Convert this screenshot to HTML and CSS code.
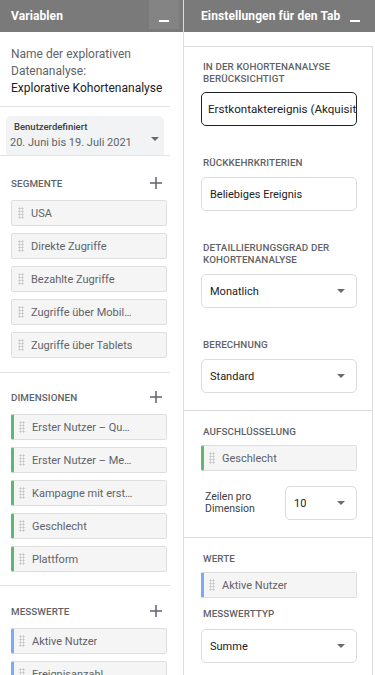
FILE: index.html
```html
<!DOCTYPE html>
<html lang="de">
<head>
<meta charset="utf-8">
<link rel="stylesheet" href="styles.css">
</head>
<body>
<div class="app">
  <aside class="left">
    <div class="head">
      <span class="title">Variablen</span>
      <span class="min"><i></i></span>
    </div>
    <div class="lbody">
      <section class="sec sec-name">
        <div class="name-lbl">Name der explorativen<br>Datenanalyse:</div>
        <div class="name-val">Explorative Kohortenanalyse</div>
      </section>
      <section class="sec sec-date">
        <div class="datebox">
          <div class="date-small">Benutzerdefiniert</div>
          <div class="date-range">20. Juni bis 19. Juli 2021</div>
          <span class="caret date-caret"></span>
        </div>
      </section>
      <section class="sec sec-list sec-first">
        <div class="sec-head">
          <span class="cap">SEGMENTE</span>
          <svg class="plus" width="12" height="12" viewBox="0 0 12 12"><path d="M6 0V12M0 6H12" stroke="#5f6368" stroke-width="1.5"/></svg>
        </div>
        <div class="items">
          <div class="chip"><span class="grip"></span><span class="chip-t">USA</span></div>
          <div class="chip"><span class="grip"></span><span class="chip-t">Direkte Zugriffe</span></div>
          <div class="chip"><span class="grip"></span><span class="chip-t">Bezahlte Zugriffe</span></div>
          <div class="chip"><span class="grip"></span><span class="chip-t">Zugriffe über Mobilgeräte</span></div>
          <div class="chip"><span class="grip"></span><span class="chip-t">Zugriffe über Tablets</span></div>
        </div>
      </section>
      <section class="sec sec-list">
        <div class="sec-head">
          <span class="cap">DIMENSIONEN</span>
          <svg class="plus" width="12" height="12" viewBox="0 0 12 12"><path d="M6 0V12M0 6H12" stroke="#5f6368" stroke-width="1.5"/></svg>
        </div>
        <div class="items">
          <div class="chip dim"><span class="grip"></span><span class="chip-t">Erster Nutzer – Quelle</span></div>
          <div class="chip dim"><span class="grip"></span><span class="chip-t">Erster Nutzer – Medium</span></div>
          <div class="chip dim"><span class="grip"></span><span class="chip-t">Kampagne mit erstem Nutzer</span></div>
          <div class="chip dim"><span class="grip"></span><span class="chip-t">Geschlecht</span></div>
          <div class="chip dim"><span class="grip"></span><span class="chip-t">Plattform</span></div>
        </div>
      </section>
      <section class="sec sec-list sec-last">
        <div class="sec-head">
          <span class="cap">MESSWERTE</span>
          <svg class="plus" width="12" height="12" viewBox="0 0 12 12"><path d="M6 0V12M0 6H12" stroke="#5f6368" stroke-width="1.5"/></svg>
        </div>
        <div class="items">
          <div class="chip met"><span class="grip"></span><span class="chip-t">Aktive Nutzer</span></div>
          <div class="chip met"><span class="grip"></span><span class="chip-t">Ereignisanzahl</span></div>
        </div>
      </section>
    </div>
  </aside>
  <main class="right">
    <div class="head rhead">
      <span class="title">Einstellungen für den Tab</span>
      <span class="rmin"><i></i></span>
    </div>
    <div class="rbody">
      <div class="card">
        <section class="rsec rsec-1">
          <div class="cap rcap">IN DER KOHORTENANALYSE<br>BERÜCKSICHTIGT</div>
          <div class="field focused"><span class="field-t">Erstkontaktereignis (Akquisition)</span></div>
          <div class="cap rcap gap">RÜCKKEHRKRITERIEN</div>
          <div class="field"><span class="field-t">Beliebiges Ereignis</span></div>
          <div class="cap rcap gap">DETAILLIERUNGSGRAD DER<br>KOHORTENANALYSE</div>
          <div class="field"><span class="field-t">Monatlich</span><span class="caret"></span></div>
          <div class="cap rcap gap">BERECHNUNG</div>
          <div class="field"><span class="field-t">Standard</span><span class="caret"></span></div>
        </section>
        <section class="rsec rsec-2">
          <div class="cap rcap">AUFSCHLÜSSELUNG</div>
          <div class="chip dim rchip"><span class="grip"></span><span class="chip-t">Geschlecht</span></div>
          <div class="rows">
            <span class="rows-l">Zeilen pro<br>Dimension</span>
            <div class="field small"><span class="field-t">10</span><span class="caret"></span></div>
          </div>
        </section>
        <section class="rsec rsec-3">
          <div class="cap rcap">WERTE</div>
          <div class="chip met rchip"><span class="grip"></span><span class="chip-t">Aktive Nutzer</span></div>
          <div class="cap rcap gap2">MESSWERTTYP</div>
          <div class="field"><span class="field-t">Summe</span><span class="caret"></span></div>
        </section>
      </div>
    </div>
  </main>
</div>
</body>
</html>
```
FILE: styles.css
```css
* { box-sizing: border-box; }
html, body { margin: 0; padding: 0; background: #fff; }
body {
  font-family: Roboto, "Liberation Sans", Arial, sans-serif;
  color: #202124;
  width: 375px;
  height: 675px;
  overflow: hidden;
}
.app { display: flex; height: 675px; overflow: hidden; }

.left {
  width: 184px;
  border-right: 1px solid #dadce0;
  flex: none;
  overflow: hidden;
}
.right { width: 191px; flex: none; overflow: hidden; }

.head {
  height: 32px;
  background: #7a7a7a;
  display: flex;
  align-items: center;
  justify-content: space-between;
  color: #fff;
}
.title {
  font-size: 12px;
  font-weight: 700;
  padding-left: 11px;
  letter-spacing: 0.1px;
  white-space: nowrap;
}
.min {
  width: 30px;
  height: 29px;
  align-self: flex-start;
  background: #848484;
  margin-right: 4px;
  display: flex;
  justify-content: center;
  align-items: flex-end;
  padding-bottom: 7px;
  flex: none;
}
.min i, .rmin i {
  display: block;
  width: 10px;
  height: 2px;
  background: #fff;
}
.rhead .title { padding-left: 17px; }
.rmin {
  width: 30px;
  height: 29px;
  align-self: flex-start;
  display: flex;
  justify-content: center;
  align-items: flex-end;
  padding-bottom: 7px;
  margin-right: 5px;
  flex: none;
}

.lbody { width: 170px; }
.sec { border-bottom: 1px solid #e3e3e3; }
.sec-name { padding: 14px 4px 9px 11px; font-size: 12px; line-height: 17px; }
.name-lbl { color: #5f6368; }
.name-val { color: #202124; white-space: nowrap; }

.sec-date { padding: 9px 6px 0 6px; }
.datebox {
  position: relative;
  background: #f1f3f4;
  border-radius: 5px 5px 0 0;
  height: 39px;
  padding: 5px 8px 0 8px;
}
.date-small { font-size: 9.5px; line-height: 12px; color: #3c4043; font-weight: 500; }
.date-range { font-size: 11px; line-height: 18px; color: #5f6368; margin-top: 1px; margin-left: -4px; }
.caret {
  width: 0; height: 0;
  flex: none;
  border-left: 4px solid transparent;
  border-right: 4px solid transparent;
  border-top: 4px solid #6b6b6b;
}
.date-caret { position: absolute; right: 5px; top: 21px; }

.sec-list { padding: 17px 3px 13px 11px; }
.sec-first { padding-top: 20px; padding-bottom: 14px; }
.sec-last { border-bottom: none; padding-top: 18px; }
.sec-head {
  display: flex;
  justify-content: space-between;
  align-items: center;
  height: 14px;
  padding-right: 5px;
  margin-bottom: 10px;
}
.cap {
  font-size: 9.8px;
  font-weight: 500;
  color: #5f6368;
  letter-spacing: 0.1px;
}
.items { display: flex; flex-direction: column; gap: 7px; }
.chip {
  height: 26px;
  background: #f5f5f5;
  border: 1px solid #dedede;
  border-radius: 2px;
  display: flex;
  align-items: center;
  padding: 0 32px 0 6px;
}
.chip.dim { border-left: 3px solid #5bb974; padding-left: 5px; }
.chip.met { border-left: 3px solid #7baaf7; padding-left: 5px; }
.grip {
  flex: none;
  width: 6px;
  height: 12px;
  margin-right: 7px;
  background-image: radial-gradient(circle, #c4c4c4 0.9px, transparent 1.2px);
  background-size: 3px 3px;
}
.chip-t {
  font-size: 11px;
  color: #5f6368;
  white-space: nowrap;
  overflow: hidden;
  text-overflow: ellipsis;
}

.rbody { padding-top: 14px; }
.card {
  border-top: 1px solid #dadce0;
  border-right: 1px solid #dadce0;
  width: 189px;
  min-height: 629px;
}
.rsec { padding: 0 15px 0 17px; border-bottom: 1px solid #dadce0; }
.rsec-1 { padding-top: 14px; padding-bottom: 17px; }
.rsec-2 { padding-top: 15px; padding-bottom: 17px; }
.rsec-3 { padding-top: 15px; padding-bottom: 14px; border-bottom: none; }
.rcap { line-height: 12px; padding-left: 2px; margin-bottom: 7px; }
.rcap.gap { margin-top: 31px; margin-bottom: 8px; }
.rcap.gap2 { margin-top: 10px; margin-bottom: 9px; }
.field {
  height: 34px;
  border: 1px solid #dadce0;
  border-radius: 5px;
  display: flex;
  align-items: center;
  justify-content: space-between;
  padding: 0 11px 0 8px;
  overflow: hidden;
}
.field.focused { border-color: #202124; padding-right: 0; padding-left: 6px; }
.field.focused .field-t { font-size: 11.6px; }
.field-t {
  font-size: 11px;
  color: #202124;
  white-space: nowrap;
  overflow: hidden;
}
.rsec-2 .rchip { margin-top: 0; }
.rows {
  display: flex;
  align-items: center;
  justify-content: space-between;
  margin-top: 15px;
}
.rows-l { font-size: 10.5px; line-height: 12px; color: #3c4043; padding-left: 4px; }
.field.small { width: 72px; padding-left: 8px; }
```
